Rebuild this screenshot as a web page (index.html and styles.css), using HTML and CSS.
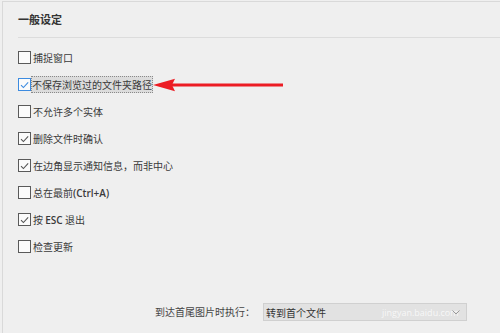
FILE: index.html
```html
<!DOCTYPE html>
<html lang="zh-CN">
<head>
  <meta charset="UTF-8" />
  <title>一般设定</title>
  <link rel="stylesheet" href="styles.css">
</head>
<body>
  <div class="panel">
    <div class="header">
      <h2>一般设定</h2>
    </div>

    <div class="options">
      <label class="option"><span class="box"></span><span>捕捉窗口</span></label>
      <label class="option">
        <span class="box blue">
          <svg viewBox="0 0 12 12" width="12" height="12"><path d="M2.2 6.2 L4.8 8.8 L10 3.2" fill="none" stroke="#3c8be0" stroke-width="1.2"/></svg>
        </span>
        <span class="focus-text">不保存浏览过的文件夹路径</span>
        <svg class="arrow" width="131" height="14" viewBox="0 0 131 14">
          <path d="M19 5.6 H130 V8.4 H19 Z" fill="#ec1c24"/>
          <path d="M0 7 L22 0.8 L19 7 L22 13.2 Z" fill="#ec1c24"/>
        </svg>
      </label>
      <label class="option"><span class="box"></span><span>不允许多个实体</span></label>
      <label class="option">
        <span class="box">
          <svg viewBox="0 0 12 12" width="12" height="12"><path d="M2.2 6.2 L4.8 8.8 L10 3.2" fill="none" stroke="#555" stroke-width="1.2"/></svg>
        </span>
        <span>删除文件时确认</span>
      </label>
      <label class="option">
        <span class="box">
          <svg viewBox="0 0 12 12" width="12" height="12"><path d="M2.2 6.2 L4.8 8.8 L10 3.2" fill="none" stroke="#555" stroke-width="1.2"/></svg>
        </span>
        <span>在边角显示通知信息，而非中心</span>
      </label>
      <label class="option"><span class="box"></span><span>总在最前<span class="latin">(Ctrl+A)</span></span></label>
      <label class="option">
        <span class="box">
          <svg viewBox="0 0 12 12" width="12" height="12"><path d="M2.2 6.2 L4.8 8.8 L10 3.2" fill="none" stroke="#555" stroke-width="1.2"/></svg>
        </span>
        <span>按 <span class="latin">ESC</span> 退出</span>
      </label>
      <label class="option"><span class="box"></span><span>检查更新</span></label>
    </div>

    <div class="footer">
      <span class="footer-label">到达首尾图片时执行：</span>
      <div class="select">
        <span>转到首个文件</span>
        <span class="watermark">jingyan.baidu.com</span>
        <svg class="chevron" width="8" height="5" viewBox="0 0 8 5"><path d="M0.5 0.5 L4 4 L7.5 0.5" fill="none" stroke="#999" stroke-width="1"/></svg>
      </div>
    </div>
  </div>
</body>
</html>
```

FILE: styles.css
```css
* {
  box-sizing: border-box;
  margin: 0;
  padding: 0;
}

body {
  background-color: #efefef;
  font-family: "Noto Sans CJK SC", "Liberation Sans", sans-serif;
  font-size: 10px;
  color: #3a3a3a;
  width: 500px;
  height: 333px;
  overflow: hidden;
  padding: 1px 0 0 2px;
}

.panel {
  height: 332px;
  border-top: 1px solid #d9d9d9;
  border-left: 1px solid #d9d9d9;
  display: flex;
  flex-direction: column;
}

.header {
  margin-left: 15px;
  height: 36px;
  border-bottom: 1px solid #dcdcdc;
  display: flex;
  align-items: center;
}

.header h2 {
  font-size: 11px;
  font-weight: bold;
  color: #333;
  padding-bottom: 2px;
}

.options {
  padding: 6px 0 0 15px;
  display: flex;
  flex-direction: column;
}

.option {
  height: 27px;
  display: flex;
  align-items: center;
  gap: 2px;
  white-space: nowrap;
}

.box {
  width: 13px;
  height: 13px;
  border: 1px solid #5a5a5a;
  background-color: #fbfbfb;
  display: flex;
  align-items: center;
  justify-content: center;
}

.box.blue {
  border-color: #3c8be0;
}

.box svg {
  display: block;
}

.focus-text {
  margin-left: -2px;
  background-color: #dcdcdc;
  border: 1px dotted #8a8a8a;
  line-height: 15px;
}

.latin {
  font-family: "Open Sans", "Liberation Sans", sans-serif;
  font-weight: 600;
  font-size: 10px;
}

.arrow {
  display: block;
  margin-left: -2px;
}

.footer {
  margin-top: auto;
  height: 38px;
  padding: 8px 0 0 152px;
  display: flex;
  align-items: flex-start;
}

.footer-label {
  width: 108px;
  line-height: 18px;
  color: #444;
}

.select {
  position: relative;
  width: 204px;
  height: 18px;
  background-color: #e2e2e2;
  border: 1px solid #d0d0d0;
  display: flex;
  align-items: center;
  padding-left: 2px;
  color: #333;
}

.watermark {
  position: absolute;
  left: 118px;
  top: 2px;
  font-family: "Open Sans", "Liberation Sans", sans-serif;
  font-size: 9px;
  color: rgba(255, 255, 255, 0.75);
}

.chevron {
  position: absolute;
  right: 6px;
  top: 6px;
}
```
